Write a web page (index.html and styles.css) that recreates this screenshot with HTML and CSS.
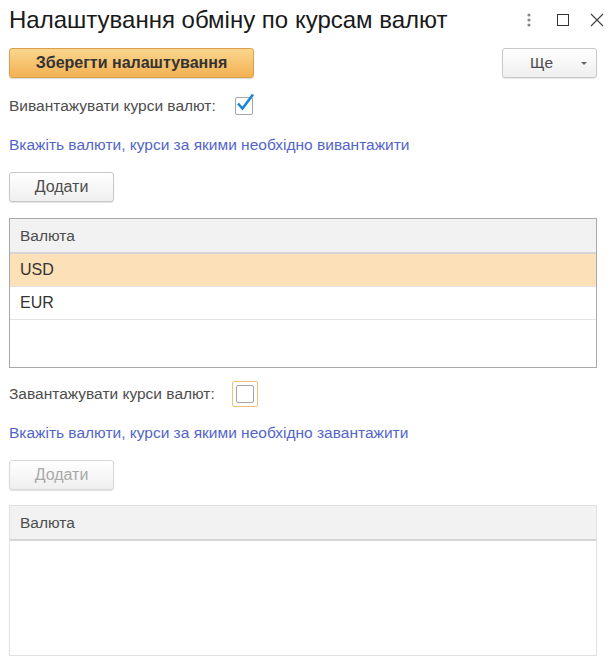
FILE: index.html
```html
<!DOCTYPE html>
<html lang="uk">
<head>
  <meta charset="UTF-8">
  <title>Налаштування обміну по курсам валют</title>
  <link rel="stylesheet" href="styles.css">
</head>
<body>
  <div class="form">
    <div class="title-bar">
      <h1>Налаштування обміну по курсам валют</h1>
      <div class="window-tools">
        <span class="tool">
          <svg width="6" height="14" viewBox="0 0 6 14"><circle cx="3" cy="2" r="1.6" fill="#888"/><circle cx="3" cy="7" r="1.6" fill="#888"/><circle cx="3" cy="12" r="1.6" fill="#888"/></svg>
        </span>
        <span class="tool">
          <svg width="12" height="12" viewBox="0 0 12 12"><rect x="0.5" y="0.5" width="11" height="11" fill="none" stroke="#333" stroke-width="1"/></svg>
        </span>
        <span class="tool">
          <svg width="14" height="14" viewBox="0 0 14 14"><path d="M1 1L13 13M13 1L1 13" stroke="#444" stroke-width="1.2"/></svg>
        </span>
      </div>
    </div>

    <div class="command-bar">
      <button class="btn btn-default">Зберегти налаштування</button>
      <button class="btn btn-more">Ще <span class="caret"></span></button>
    </div>

    <!-- Вивантаження -->
    <div class="field-row">
      <span class="field-label">Вивантажувати курси валют:</span>
      <span class="checkbox checked">
        <svg width="22" height="22" viewBox="0 0 22 22"><path d="M4 10.5L8.5 15.5L19 1.5" fill="none" stroke="#1b86d6" stroke-width="2.6"/></svg>
      </span>
    </div>
    <div class="hint">Вкажіть валюти, курси за якими необхідно вивантажити</div>
    <div class="btn-row">
      <button class="btn btn-small">Додати</button>
    </div>
    <div class="grid">
      <div class="grid-head">Валюта</div>
      <div class="grid-row selected">USD</div>
      <div class="grid-row">EUR</div>
    </div>

    <!-- Завантаження -->
    <div class="field-row second">
      <span class="field-label">Завантажувати курси валют:</span>
      <span class="checkbox focused"><span class="box"></span></span>
    </div>
    <div class="hint hint-second">Вкажіть валюти, курси за якими необхідно завантажити</div>
    <div class="btn-row">
      <button class="btn btn-small" disabled>Додати</button>
    </div>
    <div class="grid grid-disabled">
      <div class="grid-head">Валюта</div>
    </div>
  </div>
</body>
</html>
```

FILE: styles.css
```css
body { margin: 0; background: #fff; font-family: "Liberation Sans", Arial, sans-serif; font-size: 15.5px; color: #4d4d4d; }
.form { padding: 0 19px 0 9px; }

.title-bar { display: flex; align-items: center; justify-content: space-between; height: 40px; }
h1 { margin: 0; font-size: 24px; font-weight: normal; color: #1a1a1a; line-height: 40px; }
.window-tools { display: flex; align-items: center; gap: 0; margin-right: -17px; }
.tool { width: 34px; display: flex; justify-content: center; align-items: center; }

.command-bar { display: flex; justify-content: space-between; margin-top: 8px; }
.btn { font-family: inherit; font-size: 15.5px; height: 30px; border-radius: 3px; cursor: pointer; color: #4d4d4d; }
.btn-default { width: 245px; font-size: 16px; font-weight: bold; color: #333; border: 1px solid #d9a04c; background: linear-gradient(#fbd68e, #f3b153); box-shadow: 0 1px 1px rgba(0,0,0,0.15); }
.btn-more { width: 95px; position: relative; border: 1px solid #c8c8c8; background: linear-gradient(#fff, #efefef); box-shadow: 0 1px 1px rgba(0,0,0,0.1); padding-right: 22px; }
.caret { position: absolute; right: 9px; top: 13px; border-left: 3px solid transparent; border-right: 3px solid transparent; border-top: 3px solid #666; }

.field-row { display: flex; align-items: center; height: 22px; margin-top: 17px; line-height: 18px; }
.field-row.second { height: 28px; margin-top: 12px; }
.field-label { width: 226px; }
.checkbox { width: 18px; height: 18px; box-sizing: border-box; border: 1px solid #a6a6a6; border-radius: 2px; position: relative; }
.checkbox.checked svg { position: absolute; left: -2px; top: -5px; }
.checkbox.focused { width: 26px; height: 26px; border: 1px solid #f2c07a; border-radius: 2px; padding: 3px; margin-left: -3px; }
.checkbox .box { display: block; width: 18px; height: 18px; box-sizing: border-box; border: 1px solid #a6a6a6; border-radius: 2px; }

.hint { color: #5365c8; margin-top: 19px; line-height: 18px; }
.hint.hint-second { margin-top: 16px; }
.btn-row { margin-top: 18px; }
.btn-small { width: 105px; border: 1px solid #c8c8c8; background: linear-gradient(#fff, #efefef); box-shadow: 0 1px 1px rgba(0,0,0,0.12); font-size: 16px; }
.btn-small:disabled { color: #a8a8a8; border-color: #d8d8d8; cursor: default; }

.grid { margin-top: 16px; height: 150px; border: 1px solid #a8a8a8; box-sizing: border-box; }
.grid-head { height: 33px; line-height: 34px; padding-left: 10px; background: #f2f2f2; border-bottom: 2px solid #d6d6d6; color: #4d4d4d; }
.grid-row { height: 32px; line-height: 32px; padding-left: 10px; border-bottom: 1px solid #e3e3e3; color: #333; font-size: 16px; }
.grid-row.selected { background: #fce0b7; }
.grid-disabled { margin-top: 15px; border-color: #e0e0e0; height: 151px; }
```
